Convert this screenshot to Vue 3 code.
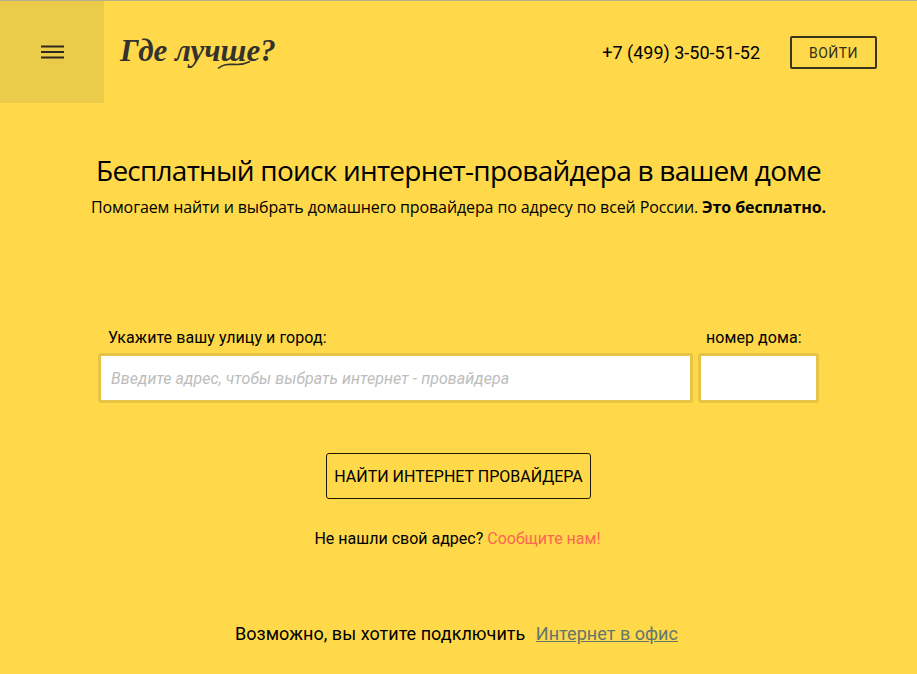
<script setup>
const title = 'Бесплатный поиск интернет-провайдера в вашем доме'
</script>

<template>
  <div class="page">
    <header class="top">
      <button class="menu" aria-label="Меню">
        <svg width="23" height="14" viewBox="0 0 23 14"><path d="M0 1.5h23M0 7h23M0 12.5h23" stroke="#2f2b1c" stroke-width="1.8" fill="none"/></svg>
      </button>
      <div class="logo">
        Где лучше?
        <svg class="swash" width="34" height="10" viewBox="0 0 34 10"><path d="M1 8.5C7 3 13 4.5 20 4.5S29 3.5 33 1.5" stroke="#33322c" stroke-width="1.6" fill="none"/></svg>
      </div>
      <div class="phone">+7 (499) 3-50-51-52</div>
      <a class="login">ВОЙТИ</a>
    </header>
    <section class="hero">
      <h1>{{ title }}</h1>
      <p>Помогаем найти и выбрать домашнего провайдера по адресу по всей России. <b>Это бесплатно.</b></p>
    </section>
    <form class="form">
      <div class="street">
        <label>Укажите вашу улицу и город:</label>
        <input placeholder="Введите адрес, чтобы выбрать интернет - провайдера" />
      </div>
      <div class="house">
        <label>номер дома:</label>
        <input />
      </div>
    </form>
    <div class="action"><button class="find">НАЙТИ ИНТЕРНЕТ ПРОВАЙДЕРА</button></div>
    <p class="missing">Не нашли свой адрес? <a>Сообщите нам!</a></p>
    <p class="office">Возможно, вы хотите подключить <a>Интернет в офис</a></p>
  </div>
</template>

<style>
html, body { margin: 0; background: #ffd94a; }
</style>

<style scoped>
.page {
  width: 917px; height: 674px; overflow: hidden; box-sizing: border-box;
  background: #ffd94a; border-top: 1px solid #b5ae8c;
  font-family: Roboto, sans-serif; color: #000;
}
.top { display: flex; align-items: center; height: 102px; padding-right: 40px; }
.menu {
  width: 104px; height: 102px; border: 0; padding: 0; background: #ebcb4a;
  display: flex; align-items: center; justify-content: center;
}
.logo {
  position: relative; margin-left: 16px; margin-top: -3px; font: italic bold 31px "Liberation Serif", serif;
  color: #33322c; flex: 1;
}
.swash { position: absolute; left: 97px; top: 27px; }
.phone { font-size: 18px; margin-right: 30px; margin-top: 1px; }
.login {
  box-sizing: border-box; width: 87px; height: 33px; border: 2px solid #3b3520; border-radius: 2px;
  display: flex; align-items: center; justify-content: center;
  font-size: 14px; letter-spacing: 0.5px; color: #332e1a; margin-top: 1px;
}
.hero { text-align: center; margin-top: 49px; }
h1 { margin: 0; font: 400 28px/36px "Open Sans", sans-serif; letter-spacing: -0.76px; }
.hero p { margin: 8px 0 0; font: 400 16px/22px "Open Sans", sans-serif; letter-spacing: -0.11px; }
.form { display: flex; gap: 5px; margin: 110px 0 0 98px; }
label { display: block; font-size: 16px; line-height: 20px; margin-bottom: 5px; letter-spacing: 0.07px; }
.street label { padding-left: 10px; }
.house label { padding-left: 8px; }
input {
  display: block; box-sizing: border-box; height: 50px; border: 3px solid #e8c446; border-radius: 3px;
  background: #fff; padding: 0 10px; font: italic 16px Roboto, sans-serif; letter-spacing: 0.06px; outline: 0;
}
input::placeholder { color: #bdbdbd; }
.street input { width: 595px; }
.house input { width: 121px; }
.action { display: flex; justify-content: center; margin-top: 50px; }
.find {
  width: 265px; height: 46px; border: 1px solid #1d1a0c; border-radius: 3px; background: transparent;
  font: 400 16px Roboto, sans-serif; color: #000; padding: 0;
}
.missing { text-align: center; font-size: 16px; line-height: 20px; margin: 30px 0 0; padding-right: 2px; }
.missing a { color: #fb6650; }
.office { text-align: center; font-size: 18px; line-height: 22px; margin: 74px 0 0; padding-right: 4px; letter-spacing: 0.03px; }
.office a { color: #64766c; text-decoration: underline; margin-left: 6px; }
</style>
